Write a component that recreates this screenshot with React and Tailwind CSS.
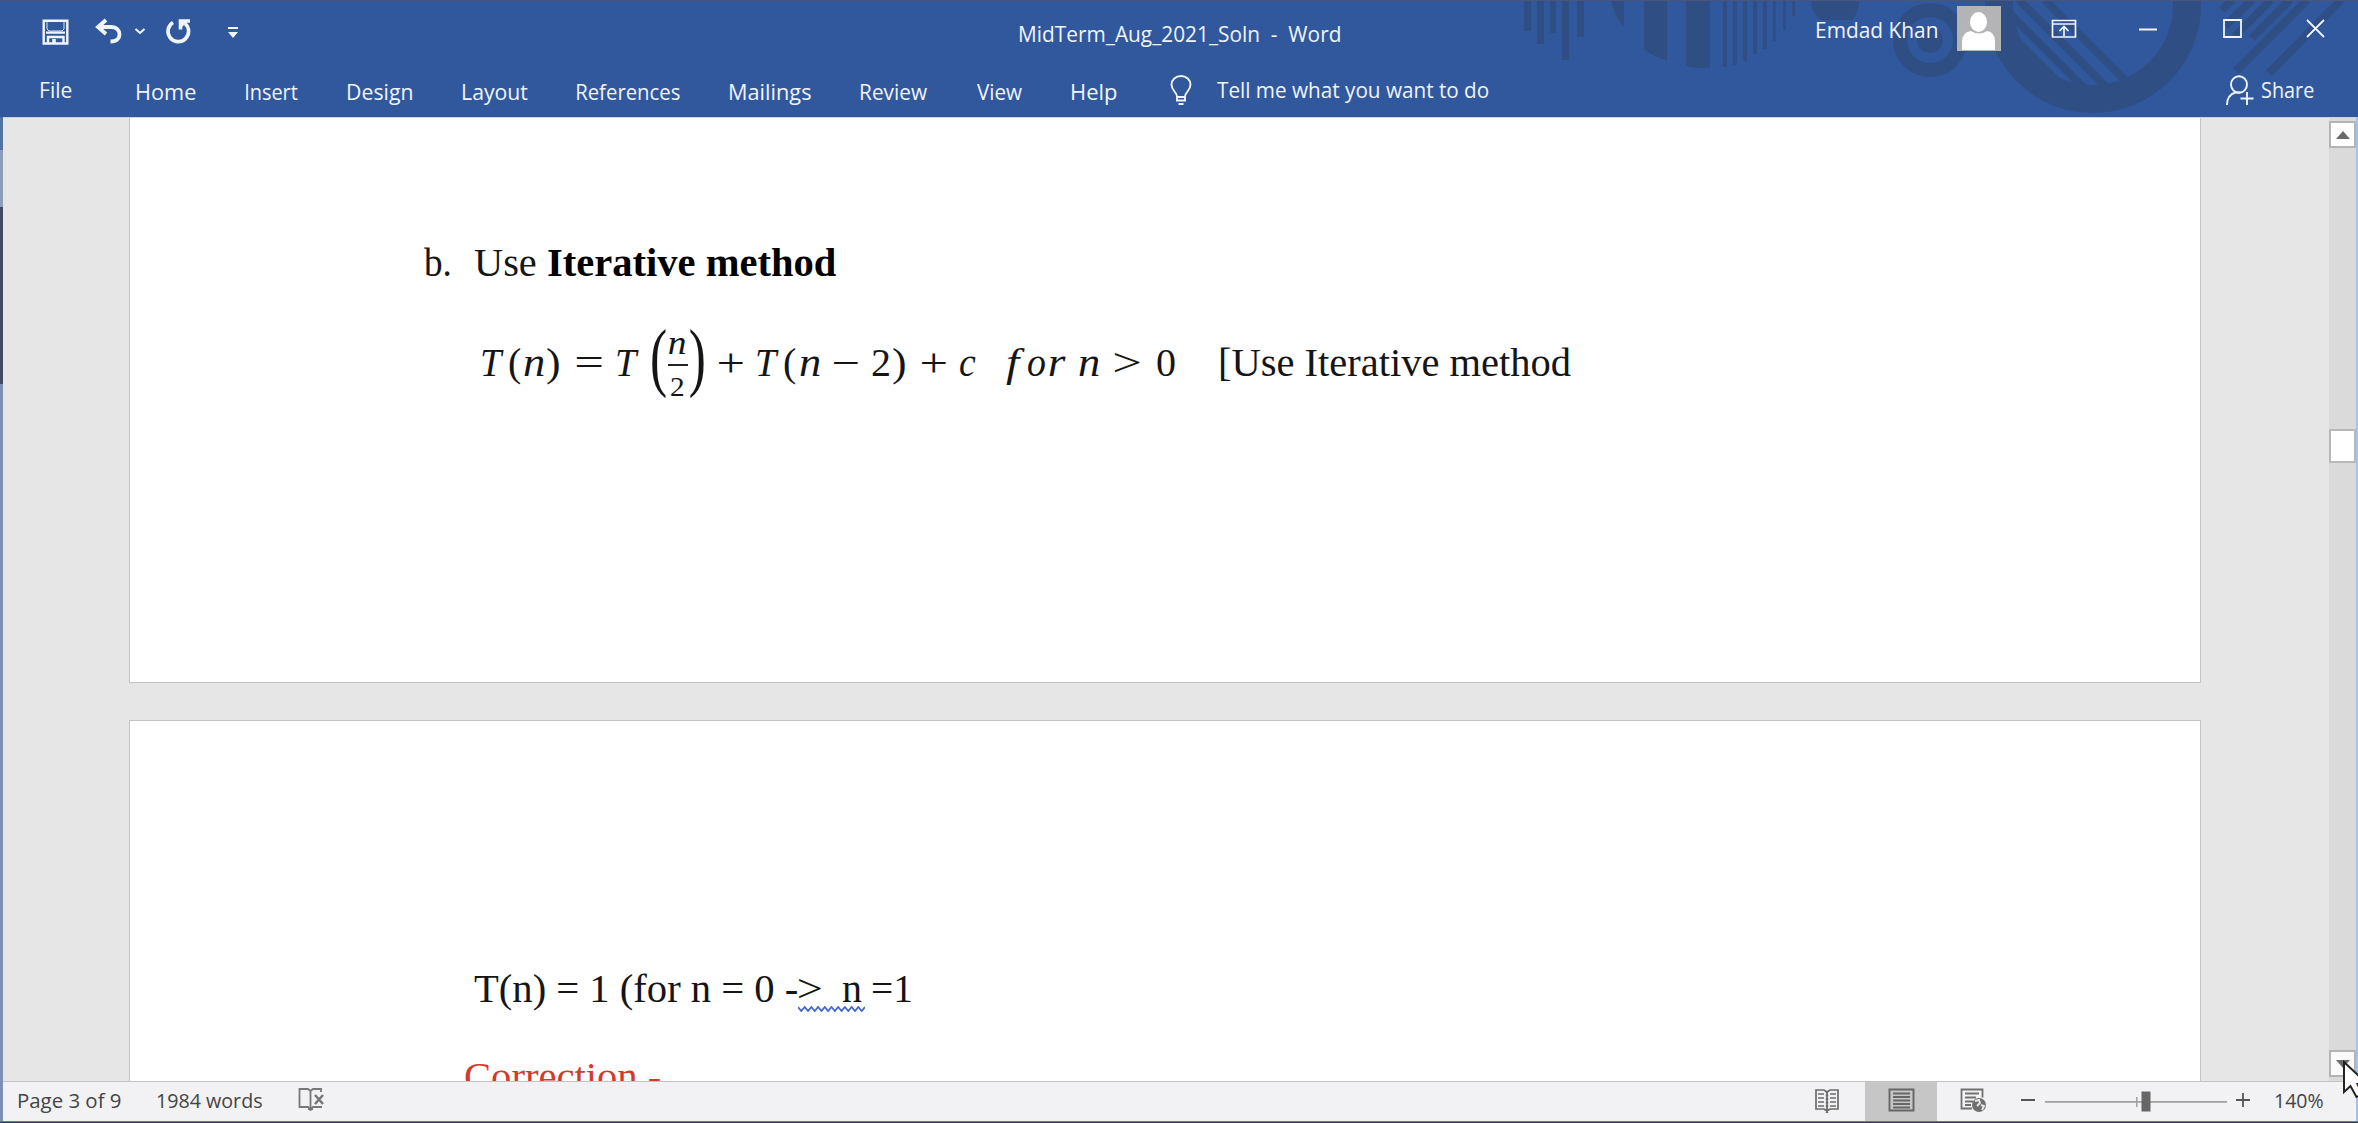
import { useLayoutEffect, useRef, useState } from "react";

/* Text stretched so that its ink fills the width of its box. */
function Fit({ className = "", children }) {
  const outer = useRef(null);
  const [transform, setTransform] = useState("none");
  useLayoutEffect(() => {
    const s = getComputedStyle(outer.current);
    const ctx = document.createElement("canvas").getContext("2d");
    ctx.font = `${s.fontStyle} ${s.fontWeight} ${s.fontSize} ${s.fontFamily}`;
    const m = ctx.measureText(children);
    const k = outer.current.clientWidth / (m.actualBoundingBoxLeft + m.actualBoundingBoxRight);
    setTransform(`translateX(${m.actualBoundingBoxLeft * k}px) scaleX(${k})`);
  }, [children]);
  return (
    <span ref={outer} className={`block shrink-0 whitespace-pre ${className}`}>
      <span className="block w-max origin-left" style={{ transform }}>{children}</span>
    </span>
  );
}

const tabs = [
  ["Home", "ml-[65px] w-[59px]"],
  ["Insert", "ml-[50px] w-[52px]"],
  ["Design", "ml-[50px] w-[64px]"],
  ["Layout", "ml-[51px] w-[65px]"],
  ["References", "ml-[49px] w-[103px]"],
  ["Mailings", "ml-[50px] w-[81px]"],
  ["Review", "ml-[50px] w-[66px]"],
  ["View", "ml-[50px] w-[45px]"],
  ["Help", "ml-[50px] w-[45px]"],
];

function Decoration() {
  const bars = [
    [1524, 7, 31], [1537, 7, 44], [1550, 6, 33], [1562, 7, 60], [1577, 7, 37],
    [1723, 4, 67], [1733, 4, 65], [1743, 4, 61], [1753, 4, 54],
    [1763, 4, 49], [1773, 3, 41], [1783, 3, 30], [1792, 3, 16],
  ];
  return (
    <svg className="absolute left-0 top-0" width="2358" height="117" fill="#2f4e84" stroke="none">
      <defs>
        <clipPath id="disc"><circle cx="2092" cy="5" r="84" /></clipPath>
      </defs>
      {bars.map(([x, w, h]) => <rect key={x} x={x} y="0" width={w} height={h} />)}
      <path d="M1611 0h13v27q-10-10-13-27zM1644 0h23v61q-12-4-23-11zM1686 0h24v68q-14 1-24-2z" />
      <path d="M1811 0h48q0 12-7 20h-32q-9-8-9-20z" />
      <circle cx="1930" cy="40" r="30" fill="none" stroke="#2f4e84" strokeWidth="14" />
      <circle cx="1930" cy="40" r="13" />
      <circle cx="2093" cy="5" r="94" fill="none" stroke="#2f4e84" strokeWidth="28" />
      <g clipPath="url(#disc)" stroke="#2f4e84" strokeWidth="8">
        <path d="M1976 0l120 120M1996 0l120 120M2019 0l120 120M2045 0l120 120" />
      </g>
      <g stroke="#2f4e84" strokeWidth="8">
        <path d="M2232 0l-10 10M2252 0l-27 26M2271 0l-36 36M2290 0l-38 38M2307 0l-71 71M2341 0l-72 73" />
      </g>
    </svg>
  );
}

function Header() {
  return (
    <header className="relative h-[117px] shrink-0 overflow-hidden bg-[#31589c] text-[22px] font-medium text-[#f0f4fb]">
      <Decoration />
      <div className="absolute inset-x-0 top-0 h-px bg-[#47567a]" />
      <div className="relative flex h-[60px] items-start">
        <svg className="ml-[42px] mt-[19px] shrink-0" width="27" height="26" fill="none" stroke="currentColor" strokeWidth="2.4">
          <path d="M1.7 1.7h23.6v22.8H1.7zM4 13.600h19M6 24v-6h15.5V24" />
          <path d="M5 2v8l2 2h13l2-2V2" strokeWidth="0.900" />
          <path d="M12 20v4" strokeWidth="3.5" />
        </svg>
        <svg className="ml-[26px] mt-[18px] shrink-0" width="28" height="27" fill="none" stroke="currentColor" strokeWidth="3.8">
          <path d="M11 2L3 9l8 7M3 9h13c6 0 8.5 4 8.5 7.5S22 23.500 15.500 23.500" />
        </svg>
        <svg className="ml-[11px] mt-[27px] shrink-0" width="12" height="8" fill="none" stroke="currentColor" strokeWidth="2">
          <path d="M1.500 2L6 6l4.500-4" />
        </svg>
        <svg className="ml-[19px] mt-[18px] shrink-0" width="28" height="27" fill="none" stroke="currentColor" strokeWidth="3.6">
          <path d="M8 4.500A10.300 10.300 0 1 0 20 5.500" />
          <path d="M25 3H15.500v8.500" />
          <path d="M15 2h9l-9 9z" fill="currentColor" stroke="none" />
        </svg>
        <svg className="ml-[34px] mt-[26px] shrink-0" width="12" height="13" fill="currentColor">
          <path d="M1 1h10v2H1zM1 6h10l-5 6z" />
        </svg>
        <Fit className="ml-[781px] w-[320px] leading-[66px]">MidTerm_Aug_2021_Soln  -  Word</Fit>
        <Fit className="ml-[477px] w-[120px] leading-[59px]">Emdad Khan</Fit>
        <svg className="ml-[20px] mt-[6px] shrink-0" width="44" height="45">
          <rect width="44" height="45" fill="#b4b4b6" />
          <ellipse cx="21.500" cy="16" rx="8.500" ry="10" fill="#fff" />
          <path d="M5 44V36q0-10 9-11 8 5 16 0 8 1 8 11v8z" fill="#fff" />
        </svg>
        <svg className="ml-[50px] mt-[19px] shrink-0" width="26" height="20" fill="none" stroke="currentColor" strokeWidth="1.700">
          <path d="M1.500 1.500h23v16.500h-23zM1.500 5h23M13 17V8M8.500 12L13 7.500l4.500 4.500" />
        </svg>
        <svg className="ml-[62px] mt-[19px] shrink-0" width="18" height="20" stroke="currentColor" strokeWidth="2">
          <path d="M0 10.500h18" />
        </svg>
        <svg className="ml-[66px] mt-[19px] shrink-0" width="20" height="20" fill="none" stroke="currentColor" strokeWidth="1.800">
          <path d="M1 1h17v17H1z" />
        </svg>
        <svg className="ml-[63px] mt-[19px] shrink-0" width="20" height="20" fill="none" stroke="currentColor" strokeWidth="1.800">
          <path d="M1 1l17 17M18 1L1 18" />
        </svg>
      </div>
      <nav className="relative flex h-[57px] items-start leading-[62px]">
        <Fit className="ml-[41px] w-[31px] leading-[59px]">File</Fit>
        {tabs.map(([name, place]) => <Fit key={name} className={place}>{name}</Fit>)}
        <svg className="ml-[53px] mt-[15px] shrink-0" width="22" height="32" fill="none" stroke="currentColor" strokeWidth="1.900">
          <path d="M7 21.500c0-4-5.500-6-5.500-12a9.500 8.500 0 0 1 19 0c0 6-5.500 8-5.500 12v4H7zM7 22h8M8.500 29h5" />
        </svg>
        <Fit className="ml-[25px] w-[272px] leading-[59px]">Tell me what you want to do</Fit>
        <svg className="ml-[737px] mt-[15px] shrink-0" width="28" height="32" fill="none" stroke="currentColor" strokeWidth="1.900">
          <ellipse cx="13" cy="9.500" rx="8" ry="8.300" />
          <path d="M1 30c0-7 3.500-11 8.500-12.500h5M21 17v13M14.500 23.500H27.500" />
        </svg>
        <Fit className="ml-[8px] w-[52px] leading-[59px]">Share</Fit>
      </nav>
    </header>
  );
}

function Formula() {
  return (
    <div className="mt-[38px] flex h-[76px] items-start leading-[74px]">
      <Fit className="ml-[352px] w-[22px] italic">T</Fit>
      <Fit className="ml-[5px] w-[12px]">(</Fit>
      <Fit className="ml-[3px] w-[20px] italic">n</Fit>
      <Fit className="ml-[3px] w-[12px]">)</Fit>
      <Fit className="ml-[18px] w-[25px]">=</Fit>
      <Fit className="ml-[15px] w-[22px] italic">T</Fit>
      <Fit className="ml-[13px] w-[14px] text-[77px] leading-[61px]">(</Fit>
      <div className="ml-[2px] w-[20px]">
        <Fit className="ml-[1px] h-[38px] w-[17px] text-[33px] italic leading-[34px]">n</Fit>
        <div className="h-[2px] bg-[#222]" />
        <Fit className="ml-[3px] w-[13px] text-[27px] leading-[42px]">2</Fit>
      </div>
      <Fit className="ml-[2px] w-[14px] text-[77px] leading-[61px]">)</Fit>
      <Fit className="ml-[15px] w-[24px]">+</Fit>
      <Fit className="ml-[14px] w-[22px] italic">T</Fit>
      <Fit className="ml-[5px] w-[12px]">(</Fit>
      <Fit className="ml-[4px] w-[20px] italic">n</Fit>
      <Fit className="ml-[14px] w-[24px]">−</Fit>
      <Fit className="ml-[14px] w-[17px]">2</Fit>
      <Fit className="ml-[4px] w-[12px]">)</Fit>
      <Fit className="ml-[17px] w-[24px]">+</Fit>
      <Fit className="ml-[14px] w-[16px] italic">c</Fit>
      <Fit className="ml-[30px] w-[19px] italic">f</Fit>
      <Fit className="ml-[3px] w-[17px] italic">o</Fit>
      <Fit className="ml-[4px] w-[17px] italic">r</Fit>
      <Fit className="ml-[13px] w-[20px] italic">n</Fit>
      <Fit className="ml-[16px] w-[25px]">&gt;</Fit>
      <Fit className="ml-[17px] w-[18px]">0</Fit>
      <Fit className="ml-[45px] w-[351px]">[Use Iterative method</Fit>
    </div>
  );
}

function Squiggle() {
  return (
    <svg className="absolute left-0 top-[42px]" width="67" height="6" fill="none" stroke="#4468c8" strokeWidth="1.800">
      <path d="M0 1l3.350 4 3.350-4 3.350 4 3.350-4 3.350 4 3.350-4 3.350 4 3.350-4 3.350 4 3.350-4 3.350 4 3.350-4 3.350 4 3.350-4 3.350 4 3.350-4 3.350 4 3.350-4 3.350 4 3.350-4" />
    </svg>
  );
}

function Pages() {
  return (
    <div className="ml-[126px] w-[2072px] shrink-0 text-[40px] leading-[50px] text-[#151515] [font-family:'Liberation_Serif',serif]">
      <section className="h-[565px] border-x border-b border-[#c4c4c4] bg-white pt-[120px]">
        <div className="flex h-[50px]">
          <Fit className="ml-[294px] w-[26px]">b.</Fit>
          <Fit className="ml-[24px] w-[62px]">Use</Fit>
          <Fit className="ml-[12px] w-[288px] font-bold text-black">Iterative method</Fit>
        </div>
        <Formula />
      </section>
      <section className="mt-[37px] h-[420px] border border-[#c4c4c4] bg-white pt-[243px]">
        <div className="flex h-[50px]">
          <Fit className="ml-[344px] w-[323px]">T(n) = 1 (for n = 0 -</Fit>
          <div className="relative ml-[1px] flex w-[67px]">
            <Fit className="ml-[1px] w-[22px]">&gt;</Fit>
            <Fit className="ml-[21px] w-[20px]">n</Fit>
            <Squiggle />
          </div>
          <Fit className="ml-[8px] w-[38px]">=1</Fit>
        </div>
        <Fit className="ml-[335px] mt-[38px] w-[195px] text-[#d23b2b]">Correction -</Fit>
      </section>
    </div>
  );
}

function ScrollBar() {
  return (
    <div className="ml-auto flex w-[27px] flex-col bg-[#dadada] pt-[3px]">
      <div className="flex h-[27px] items-center justify-center border-2 border-[#b4b4b4] bg-white">
        <svg width="14" height="8" fill="#6a6a6a"><path d="M7 0l7 8H0z" /></svg>
      </div>
      <div className="mt-[281px] h-[34px] border-2 border-[#b8b8b8] bg-white" />
      <div className="mb-[4px] mt-auto flex h-[27px] items-center justify-center border-2 border-[#b4b4b4] bg-[#fafafa]">
        <svg width="14" height="8" fill="#6a6a6a"><path d="M7 8l7-8H0z" /></svg>
      </div>
    </div>
  );
}

function StatusBar() {
  return (
    <footer className="flex h-[40px] shrink-0 items-start border-t border-[#c3c3c3] bg-[#f2f2f4] text-[20px] leading-[37px] text-[#444]">
      <Fit className="ml-[15px] w-[103px]">Page 3 of 9</Fit>
      <Fit className="ml-[36px] w-[105px]">1984 words</Fit>
      <svg className="ml-[36px] mt-[5px] shrink-0" width="27" height="26" fill="none" stroke="#777" strokeWidth="1.800">
        <path d="M12.500 24V4L10 2H1.500v18H10l2.500 2.500L15 20h9M12.500 4L15 2h8v3M10 22h5" />
        <path d="M17 8l8 9M25 8l-8 9" strokeWidth="2.500" />
      </svg>
      <svg className="ml-[1489px] mt-[6px] shrink-0" width="26" height="25" fill="none" stroke="#6c6c6c" strokeWidth="1.700">
        <path d="M13 4l-3-2H2v19h8l3 2 3-2h8V2h-8zM13 4v21" />
        <path d="M4 6h6M4 10h6M4 14h6M4 18h6M16 6h6M16 10h6M16 14h6M16 18h6" />
        <path d="M13 3v22" strokeWidth="2.500" strokeDasharray="2 1.500" />
      </svg>
      <div className="ml-[25px] flex h-[39px] w-[72px] shrink-0 justify-center bg-[#c6c6c6] pt-[6px]">
        <svg width="27" height="25" fill="none" stroke="#666" strokeWidth="1.900">
          <path d="M1.500 1.500h24v21h-24zM5 5.500h17M5 9h17M5 12.500h17M5 16h17M5 19.500h17" />
        </svg>
      </div>
      <svg className="ml-[23px] mt-[6px] shrink-0" width="28" height="26" fill="none" stroke="#707070" strokeWidth="1.800">
        <path d="M12 20.500H1.500v-19h21v8M5 5.500h14M5 9.500h11M5 13.500h8M5 17h6" />
        <circle cx="19" cy="17" r="7" fill="#6f6f6f" stroke="none" />
        <path d="M15 13l4-1 1 3-3 3M21 17l3 1-2 4" stroke="#e8e8e8" strokeWidth="1.900" />
      </svg>
      <div className="ml-[33px] mt-[17px] h-[2px] w-[14px] shrink-0 bg-[#555]" />
      <svg className="ml-[10px] mt-[8px] shrink-0" width="182" height="24">
        <path d="M0 11h182v1.800H0zM91 7h1.500v10H91z" fill="#a0a0a0" />
        <path d="M96.500 1.500h9v20h-9z" fill="#666" />
      </svg>
      <svg className="ml-[9px] mt-[11px] shrink-0" width="14" height="14" stroke="#555" strokeWidth="1.800">
        <path d="M0 7h14M7 0v14" />
      </svg>
      <Fit className="ml-[25px] w-[48px]">140%</Fit>
    </footer>
  );
}

export default function App() {
  return (
    <div className="relative flex h-[1123px] w-[2358px] flex-col overflow-hidden bg-[#31589c] [font-family:'Open_Sans',sans-serif]">
      <Header />
      <div className="flex h-[1004px] border-r-2 border-r-[#a5c0ee]">
        <div className="flex w-[3px] shrink-0 flex-col">
          <div className="h-[33px] bg-[#54719f]" />
          <div className="h-[57px] bg-[#8e9db8]" />
          <div className="h-[177px] bg-[#434a60]" />
          <div className="flex-1 bg-[#7d8fb3]" />
        </div>
        <div className="flex min-w-0 flex-1 flex-col border-t border-[#cdd3df]">
          <div className="flex h-[963px] overflow-hidden bg-[#e6e6e6]">
            <Pages />
            <ScrollBar />
          </div>
          <StatusBar />
        </div>
      </div>
      <div className="h-px bg-[#5a7ab8]" />
      <div className="h-px bg-[#353a52]" />
      <svg className="absolute left-[2342px] top-[1059px]" width="16" height="40" fill="#fff" stroke="#222" strokeWidth="2">
        <path d="M2 3v30l6.500-6 6 11 6-3-5-10h10z" />
      </svg>
    </div>
  );
}
